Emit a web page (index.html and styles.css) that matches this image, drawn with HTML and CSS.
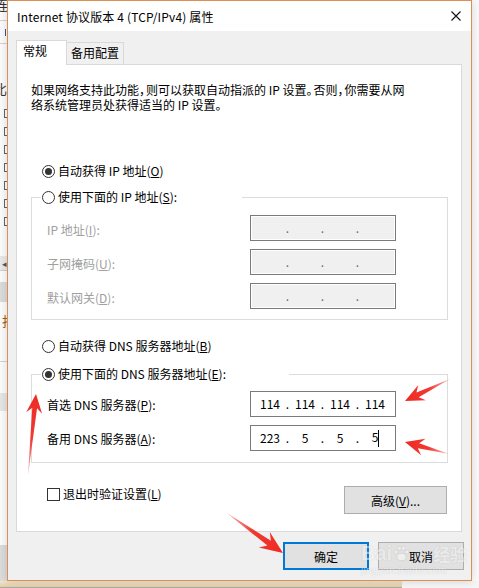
FILE: index.html
```html
<!DOCTYPE html>
<html lang="zh-CN">
<head>
<meta charset="utf-8">
<title>Internet 协议版本 4 (TCP/IPv4) 属性</title>
<link rel="stylesheet" href="styles.css">
</head>
<body>
<div class="desktop">
  <div class="bgwin">
    <div class="bg-strip">
      <span class="frag frag-top">连</span>
      <div class="bg-line l1"></div>
      <div class="bg-bar"></div>
      <div class="bg-line l2"></div>
      <span class="frag frag-mid">比</span>
      <div class="bg-checks">
        <span class="bg-check"></span><span class="bg-check"></span><span class="bg-check empty"></span><span class="bg-check"></span><span class="bg-check"></span><span class="bg-check"></span><span class="bg-check"></span>
      </div>
      <div class="bg-scroll">◂</div>
      <div class="bg-band b1"></div>
      <span class="frag frag-low">打</span>
      <div class="bg-line l3"></div>
      <div class="bg-band b2"></div>
      <div class="bg-band b3"></div>
    </div>
  </div>
  <div class="bottom-strip"></div>

  <div class="dialog">
    <div class="titlebar">
      <span class="title">Internet 协议版本 4 (TCP/IPv4) 属性</span>
      <svg class="close" width="10" height="10" viewBox="0 0 10 10"><path d="M0.5 0.5L9.5 9.5M9.5 0.5L0.5 9.5" stroke="#111" stroke-width="1.1" fill="none"/></svg>
    </div>
    <div class="body">
      <div class="tabs">
        <div class="tab active">常规</div>
        <div class="tab inactive">备用配置</div>
      </div>
      <div class="panel">
        <p class="intro"><span class="line">如果网络支持此功能<span class="punct">，</span>则可以获取自动指派的 IP 设置<span class="punct">。</span>否则<span class="punct">，</span>你需要从网</span><span class="line">络系统管理员处获得适当的 IP 设置。</span></p>

        <div class="option"><span class="radio checked"></span>自动获得 IP 地址(<u>O</u>)</div>
        <div class="group group-ip">
          <div class="legend legend-ip"><span class="radio"></span>使用下面的 IP 地址(<u>S</u>):</div>
          <div class="field-row first disabled">
            <span class="label">IP 地址(<u>I</u>):</span>
            <div class="ipbox off"><span class="octet"></span><span class="dot">.</span><span class="octet"></span><span class="dot">.</span><span class="octet"></span><span class="dot">.</span><span class="octet"></span></div>
          </div>
          <div class="field-row disabled">
            <span class="label">子网掩码(<u>U</u>):</span>
            <div class="ipbox off"><span class="octet"></span><span class="dot">.</span><span class="octet"></span><span class="dot">.</span><span class="octet"></span><span class="dot">.</span><span class="octet"></span></div>
          </div>
          <div class="field-row disabled">
            <span class="label">默认网关(<u>D</u>):</span>
            <div class="ipbox off"><span class="octet"></span><span class="dot">.</span><span class="octet"></span><span class="dot">.</span><span class="octet"></span><span class="dot">.</span><span class="octet"></span></div>
          </div>
        </div>

        <div class="option option-dns"><span class="radio"></span>自动获得 DNS 服务器地址(<u>B</u>)</div>
        <div class="group group-dns">
          <div class="legend legend-dns"><span class="radio checked"></span>使用下面的 DNS 服务器地址(<u>E</u>):</div>
          <div class="field-row first-dns">
            <span class="label">首选 DNS 服务器(<u>P</u>):</span>
            <div class="ipbox"><span class="octet">114</span><span class="dot">.</span><span class="octet">114</span><span class="dot">.</span><span class="octet">114</span><span class="dot">.</span><span class="octet">114</span></div>
          </div>
          <div class="field-row">
            <span class="label">备用 DNS 服务器(<u>A</u>):</span>
            <div class="ipbox"><span class="octet">223</span><span class="dot">.</span><span class="octet">5</span><span class="dot">.</span><span class="octet">5</span><span class="dot">.</span><span class="octet">5<span class="caret"></span></span></div>
          </div>
        </div>

        <div class="bottom-row">
          <label class="check"><span class="checkbox"></span>退出时验证设置(<u>L</u>)</label>
          <button class="btn advanced">高级(<u>V</u>)...</button>
        </div>
      </div>
      <div class="actions">
        <button class="btn default">确定</button>
        <button class="btn">取消</button>
      </div>
    </div>
  </div>

  <svg class="arrows" width="479" height="588" viewBox="0 0 479 588">
    <defs>
      <linearGradient id="red" x1="0" y1="0" x2="1" y2="0">
        <stop offset="0" stop-color="#f36a6a" stop-opacity="0.55"/>
        <stop offset="0.45" stop-color="#f03a33"/>
        <stop offset="1" stop-color="#ee2a22"/>
      </linearGradient>
    </defs>
    <g transform="translate(405,401) rotate(153.9)">
      <polygon fill="url(#red)" points="-50,0 -14,2.6 -19,8.5 0,0 -19,-8.5 -14,-2.6"/>
    </g>
    <g transform="translate(405,442) rotate(-164.9)">
      <polygon fill="url(#red)" points="-45,0 -14,2.6 -19,8.5 0,0 -19,-8.5 -14,-2.6"/>
    </g>
    <g transform="translate(36,394) rotate(-84.4)">
      <polygon fill="url(#red)" points="-82,0 -14,2.4 -19,8 0,0 -19,-8 -14,-2.4"/>
    </g>
    <g transform="translate(283,553) rotate(35.5)">
      <polygon fill="url(#red)" points="-69,0 -17,3 -23,9.5 0,0 -23,-9.5 -17,-3"/>
    </g>
  </svg>

  <div class="watermark">
    <div class="wm-main"><span class="wm-bai">Bai</span><svg class="wm-paw" width="17" height="17" viewBox="0 0 17 17"><ellipse cx="8.5" cy="12" rx="4.5" ry="3.6"/><circle cx="3" cy="7" r="1.9"/><circle cx="6.5" cy="3.2" r="1.9"/><circle cx="10.5" cy="3.2" r="1.9"/><circle cx="14" cy="7" r="1.9"/></svg><span class="wm-cn">经验</span></div>
    <div class="wm-url">jingyan.baidu.com</div>
  </div>
</div>
</body>
</html>
```

FILE: styles.css
```css
* { box-sizing: border-box; }

html, body {
  margin: 0;
  padding: 0;
}

body {
  font-family: "Noto Sans CJK SC", "Noto Sans", sans-serif;
  font-size: 12px;
  color: #000;
}

.desktop {
  position: relative;
  width: 479px;
  height: 588px;
  overflow: hidden;
  background: #f6f6f6;
}

/* background window fragments (left edge) */
.bgwin {
  width: 479px;
  height: 581px;
  background: #fbfbfb;
}

.bg-strip {
  width: 7px;
  height: 581px;
  display: flex;
  flex-direction: column;
  overflow: hidden;
  background: #fcfcfc;
}

.frag {
  display: block;
  font-size: 13px;
  line-height: 13px;
  height: 13px;
  color: #333;
  margin-left: -5px;
  white-space: nowrap;
}
.frag-top { margin-top: -2px; }
.frag-mid { margin-top: 38px; margin-left: -6px; }
.frag-low { margin-top: 12px; margin-left: 2px; color: #a0620a; }

.bg-line { height: 1px; background: #d3d3d3; }
.bg-line.l1 { margin-top: 9px; }
.bg-line.l2 { margin-top: 7px; }
.bg-line.l3 { margin-top: 34px; }

.bg-bar {
  margin-top: 8px;
  margin-left: 5px;
  width: 1px;
  height: 8px;
  background: #2a5caa;
}

.bg-checks {
  display: flex;
  flex-direction: column;
  gap: 9px;
  margin-top: 14px;
}
.bg-check {
  display: block;
  width: 9px;
  height: 9px;
  margin-left: 4px;
  border: 1px solid #666;
  background: #fff;
  box-shadow: inset 2px 0 0 1px #fff, inset 3px 0 0 3px #444;
}
.bg-check.empty { box-shadow: none; }

.bg-scroll {
  margin-top: 30px;
  height: 15px;
  line-height: 15px;
  font-size: 9px;
  color: #555;
  padding-left: 2px;
  background: #e9e9e9;
  border-bottom: 1px solid #cfcfcf;
}

.bg-band { background: #dcdcdc; }
.bg-band.b1 { margin-top: 11px; height: 22px; }
.bg-band.b2 { margin-top: 32px; height: 20px; background: #e6e6e6; }
.bg-band.b3 { margin-top: 134px; height: 40px; background: #dcdcdc; }

.bottom-strip {
  width: 402px;
  height: 7px;
  background: linear-gradient(#f3e6cb, #e3cfa6);
  border-bottom: 1px solid #a9a9a9;
}

/* dialog */
.dialog {
  position: absolute;
  left: 7px;
  top: 0;
  width: 465px;
  height: 581px;
  border: 1px solid #dc8f55;
  background: #f0f0f0;
  box-shadow: 0 0 9px rgba(0, 0, 0, 0.16);
  display: flex;
  flex-direction: column;
}

.titlebar {
  height: 30px;
  flex: none;
  background: #fff;
  display: flex;
  align-items: center;
  justify-content: space-between;
  padding: 0 10px 0 9px;
}

.title {
  font-size: 12px;
  color: #000;
  white-space: nowrap;
  letter-spacing: 0.15px;
}

.close { display: block; }

.body {
  flex: 1;
  padding: 9px 7px 10px 8px;
  display: flex;
  flex-direction: column;
}

.tabs {
  height: 24px;
  display: flex;
  align-items: flex-end;
}

.tab {
  line-height: 20px;
  border: 1px solid #d9d9d9;
  border-bottom: none;
  white-space: nowrap;
}

.tab.active {
  position: relative;
  z-index: 1;
  width: 51px;
  height: 25px;
  margin-bottom: -1px;
  padding-left: 6px;
  background: #fff;
}

.tab.inactive {
  width: 57px;
  height: 22px;
  border-left: none;
  padding-left: 4px;
  background: #f0f0f0;
}

.panel {
  width: 446px;
  height: 468px;
  background: #fff;
  border: 1px solid #d9d9d9;
  display: flex;
  flex-direction: column;
}

.intro {
  margin: 17px 0 0 14px;
  display: flex;
  flex-direction: column;
  gap: 0;
}

.intro .line {
  display: block;
  height: 15px;
  line-height: 15px;
  white-space: nowrap;
}

.punct {
  letter-spacing: -6px;
  margin-right: 1px;
}

.option {
  margin: 51px 0 0 25px;
  height: 16px;
  line-height: 16px;
  display: flex;
  align-items: center;
  white-space: nowrap;
}

.option-dns { margin-top: 18px; }

.radio {
  flex: none;
  width: 13px;
  height: 13px;
  margin-right: 3px;
  border: 1px solid #333;
  border-radius: 50%;
  background: #fff;
  display: flex;
  align-items: center;
  justify-content: center;
}

.radio.checked::after {
  content: "";
  width: 7px;
  height: 7px;
  border-radius: 50%;
  background: #333;
}

.group {
  margin-left: 14px;
  width: 417px;
  border: 1px solid #dcdcdc;
  padding-left: 15px;
}

.group-ip {
  margin-top: 18px;
  padding-bottom: 10px;
}

.group-dns {
  margin-top: 20px;
  padding-bottom: 11px;
}

.legend {
  margin: -9px 0 0 -6px;
  padding-left: 1px;
  height: 16px;
  line-height: 16px;
  background: #fff;
  display: flex;
  align-items: center;
  white-space: nowrap;
}

.legend-ip { width: 201px; }
.legend-dns { width: 248px; }

.field-row {
  height: 26px;
  margin-top: 8px;
  display: flex;
  align-items: center;
}

.field-row.first { margin-top: 10px; }
.field-row.first-dns { margin-top: 9px; }

.label {
  width: 203px;
  white-space: nowrap;
}

.field-row.disabled .label {
  color: #a0a0a0;
  padding-top: 2px;
}

.ipbox {
  width: 146px;
  height: 26px;
  border: 1px solid #7a7a7a;
  background: #fff;
  padding-left: 4px;
  display: flex;
  align-items: center;
  line-height: 16px;
}

.ipbox.off {
  background: #f0f0f0;
  box-shadow: inset 0 0 0 1px #fff;
  color: #6d6d6d;
}

.octet {
  width: 30px;
  text-align: center;
  white-space: nowrap;
}

.dot {
  width: 5px;
  text-align: center;
}

.caret {
  display: inline-block;
  width: 1px;
  height: 17px;
  margin-right: -1px;
  background: #000;
  vertical-align: middle;
}

.bottom-row {
  margin: 23px 14px 0 30px;
  display: flex;
  justify-content: space-between;
  align-items: flex-start;
}

.check {
  height: 16px;
  line-height: 16px;
  display: flex;
  align-items: center;
  white-space: nowrap;
}

.checkbox {
  width: 13px;
  height: 13px;
  margin-right: 3px;
  border: 1px solid #333;
  background: #fff;
}

.btn {
  font-family: inherit;
  font-size: 12px;
  color: #000;
  background: #e1e1e1;
  border: 1px solid #adadad;
  padding: 0;
  margin: 0;
  height: 28px;
  border-radius: 0;
}

.btn.advanced { width: 103px; }

.actions {
  margin-top: 10px;
  display: flex;
  justify-content: flex-end;
  gap: 9px;
}

.actions .btn { width: 86px; }

.btn.default {
  border: 2px solid #0078d7;
}

/* overlays */
.arrows {
  position: absolute;
  left: 0;
  top: 0;
  pointer-events: none;
}

.watermark {
  position: absolute;
  left: 361px;
  top: 543px;
  pointer-events: none;
  opacity: 0.55;
}

.wm-main {
  display: flex;
  align-items: center;
  height: 20px;
  font-family: "Liberation Sans", sans-serif;
  font-weight: bold;
  font-size: 20px;
  color: rgba(255, 255, 255, 0.9);
  text-shadow: 0 0 1px rgba(0, 0, 0, 0.3);
}

.wm-paw {
  margin: 0 2px 0 1px;
  fill: rgba(255, 255, 255, 0.9);
  stroke: rgba(0, 0, 0, 0.2);
  stroke-width: 0.6;
}

.wm-cn {
  font-family: "Noto Sans CJK SC", sans-serif;
  font-size: 17px;
  margin-left: 21px;
}

.wm-url {
  margin-top: 3px;
  font-family: "Liberation Sans", sans-serif;
  font-size: 10px;
  line-height: 10px;
  color: rgba(255, 255, 255, 0.9);
  text-shadow: 0 0 1px rgba(0, 0, 0, 0.3);
  letter-spacing: 0.3px;
}
```
